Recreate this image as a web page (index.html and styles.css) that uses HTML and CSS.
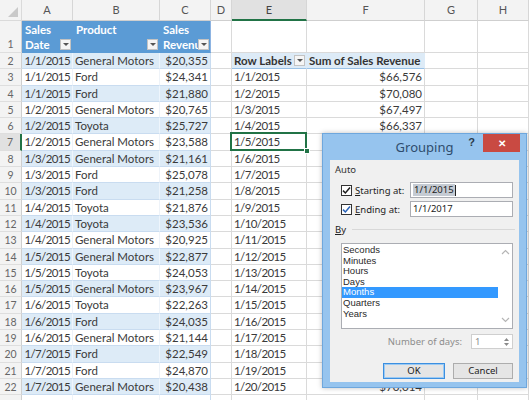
FILE: index.html
```html
<!DOCTYPE html>
<html>
<head>
<meta charset="utf-8">
<link rel="stylesheet" href="styles.css">
</head>
<body>
<div class="sheet">
<div class="corner"></div><div class="ch">A</div><div class="ch">B</div><div class="ch">C</div><div class="ch">D</div><div class="ch selcol">E</div><div class="ch">F</div><div class="ch">G</div><div class="ch">H</div>
<div class="rh rh1">1</div><div class="th">Sales<br>Date<span class="dd"></span></div><div class="th">Product<span class="dd"></span></div><div class="th thc">Sales<br>Revenue<span class="dd"></span></div><div></div><div></div><div></div><div></div><div></div>
<div class="rh">2</div><div class="tb r">1/1/2015</div><div class="tb">General Motors</div><div class="tb r tc">$20,355</div><div></div><div class="ph">Row Labels<span class="dd"></span></div><div class="ph">Sum of Sales Revenue</div><div></div><div></div>
<div class="rh">3</div><div class="tw r">1/1/2015</div><div class="tw">Ford</div><div class="tw r tc">$24,341</div><div></div><div>1/1/2015</div><div class="r">$66,576</div><div></div><div></div>
<div class="rh">4</div><div class="tb r">1/1/2015</div><div class="tb">Ford</div><div class="tb r tc">$21,880</div><div></div><div>1/2/2015</div><div class="r">$70,080</div><div></div><div></div>
<div class="rh">5</div><div class="tw r">1/2/2015</div><div class="tw">General Motors</div><div class="tw r tc">$20,765</div><div></div><div>1/3/2015</div><div class="r">$67,497</div><div></div><div></div>
<div class="rh">6</div><div class="tb r">1/2/2015</div><div class="tb">Toyota</div><div class="tb r tc">$25,727</div><div></div><div>1/4/2015</div><div class="r">$66,337</div><div></div><div></div>
<div class="rh selrow">7</div><div class="tw r">1/2/2015</div><div class="tw">General Motors</div><div class="tw r tc">$23,588</div><div></div><div class="active">1/5/2015<span class="handle"></span></div><div class="r"></div><div></div><div></div>
<div class="rh">8</div><div class="tb r">1/3/2015</div><div class="tb">General Motors</div><div class="tb r tc">$21,161</div><div></div><div>1/6/2015</div><div class="r"></div><div></div><div></div>
<div class="rh">9</div><div class="tw r">1/3/2015</div><div class="tw">Ford</div><div class="tw r tc">$25,078</div><div></div><div>1/7/2015</div><div class="r"></div><div></div><div></div>
<div class="rh">10</div><div class="tb r">1/3/2015</div><div class="tb">Ford</div><div class="tb r tc">$21,258</div><div></div><div>1/8/2015</div><div class="r"></div><div></div><div></div>
<div class="rh">11</div><div class="tw r">1/4/2015</div><div class="tw">Toyota</div><div class="tw r tc">$21,876</div><div></div><div>1/9/2015</div><div class="r"></div><div></div><div></div>
<div class="rh">12</div><div class="tb r">1/4/2015</div><div class="tb">Toyota</div><div class="tb r tc">$23,536</div><div></div><div>1/10/2015</div><div class="r"></div><div></div><div></div>
<div class="rh">13</div><div class="tw r">1/4/2015</div><div class="tw">General Motors</div><div class="tw r tc">$20,925</div><div></div><div>1/11/2015</div><div class="r"></div><div></div><div></div>
<div class="rh">14</div><div class="tb r">1/5/2015</div><div class="tb">General Motors</div><div class="tb r tc">$22,877</div><div></div><div>1/12/2015</div><div class="r"></div><div></div><div></div>
<div class="rh">15</div><div class="tw r">1/5/2015</div><div class="tw">Toyota</div><div class="tw r tc">$24,053</div><div></div><div>1/13/2015</div><div class="r"></div><div></div><div></div>
<div class="rh">16</div><div class="tb r">1/5/2015</div><div class="tb">General Motors</div><div class="tb r tc">$23,967</div><div></div><div>1/14/2015</div><div class="r"></div><div></div><div></div>
<div class="rh">17</div><div class="tw r">1/6/2015</div><div class="tw">Toyota</div><div class="tw r tc">$22,263</div><div></div><div>1/15/2015</div><div class="r"></div><div></div><div></div>
<div class="rh">18</div><div class="tb r">1/6/2015</div><div class="tb">Ford</div><div class="tb r tc">$24,035</div><div></div><div>1/16/2015</div><div class="r"></div><div></div><div></div>
<div class="rh">19</div><div class="tw r">1/6/2015</div><div class="tw">General Motors</div><div class="tw r tc">$21,144</div><div></div><div>1/17/2015</div><div class="r"></div><div></div><div></div>
<div class="rh">20</div><div class="tb r">1/7/2015</div><div class="tb">Ford</div><div class="tb r tc">$22,549</div><div></div><div>1/18/2015</div><div class="r"></div><div></div><div></div>
<div class="rh">21</div><div class="tw r">1/7/2015</div><div class="tw">Ford</div><div class="tw r tc">$24,870</div><div></div><div>1/19/2015</div><div class="r"></div><div></div><div></div>
<div class="rh">22</div><div class="tb r">1/7/2015</div><div class="tb">General Motors</div><div class="tb r tc">$20,438</div><div></div><div>1/20/2015</div><div class="r">$70,014</div><div></div><div></div>
<div class="rh"></div><div class="tw r"></div><div class="tw"></div><div class="tw r tc"></div><div></div><div></div><div class="r"></div><div></div><div></div>
</div>

<div class="dlg">
  <div class="dlg-title">
    <span></span>
    <span class="dlg-name">Grouping</span>
    <span class="dlg-ctrls"><span class="help">?</span><span class="close">&#x2715;</span></span>
  </div>
  <div class="dlg-body">
    <div class="grp">Auto</div>
    <div class="frow">
      <span class="chk"><svg width="9" height="9" viewBox="0 0 9 9"><path d="M1 4.6 L3.4 7 L8 1.6" fill="none" stroke="#1e1e1e" stroke-width="1.5"/></svg></span>
      <span class="flbl"><u>S</u>tarting at:</span>
      <span class="tbox"><span class="seltext">1/1/2015</span><span class="caret"></span></span>
    </div>
    <div class="frow">
      <span class="chk"><svg width="9" height="9" viewBox="0 0 9 9"><path d="M1 4.6 L3.4 7 L8 1.6" fill="none" stroke="#2a63b8" stroke-width="1.5"/></svg></span>
      <span class="flbl"><u>E</u>nding at:</span>
      <span class="tbox">1/1/2017</span>
    </div>
    <div class="by"><span><u>B</u>y</span><span class="sep"></span></div>
    <div class="list">
      <div class="items">
        <div>Seconds</div>
        <div>Minutes</div>
        <div>Hours</div>
        <div>Days</div>
        <div class="hl">Months</div>
        <div>Quarters</div>
        <div>Years</div>
      </div>
      <div class="vscroll">
        <svg width="9" height="6" viewBox="0 0 9 6"><path d="M1 5 L4.5 1.5 L8 5" fill="none" stroke="#b5b5b5" stroke-width="1.2"/></svg>
        <svg width="9" height="6" viewBox="0 0 9 6"><path d="M1 1 L4.5 4.5 L8 1" fill="none" stroke="#b5b5b5" stroke-width="1.2"/></svg>
      </div>
    </div>
    <div class="days">
      <span class="dlbl">Number of days:</span>
      <span class="spin"><span>1</span><span class="arrows"><svg width="5" height="3" viewBox="0 0 5 3"><path d="M0 3 L2.5 0 L5 3Z" fill="#8a8a8a"/></svg><svg width="5" height="3" viewBox="0 0 5 3"><path d="M0 0 L2.5 3 L5 0Z" fill="#8a8a8a"/></svg></span></span>
    </div>
    <div class="btns">
      <span class="btn ok">OK</span>
      <span class="btn">Cancel</span>
    </div>
  </div>
</div>
</body>
</html>
```

FILE: styles.css
```css
* { box-sizing: border-box; }
body {
  margin: 0;
  width: 529px;
  height: 400px;
  overflow: hidden;
  background: #fff;
  position: relative;
  font-family: Lato, "Open Sans", sans-serif;
}
.sheet {
  display: grid;
  grid-template-columns: 22px 51px 87px 51px 21px 75px 118px 53px 51px;
  grid-template-rows: 21px 32px repeat(22, 16.3px);
  font-size: 11.5px;
  color: #3a3a3a;
}
.sheet > div {
  position: relative;
  border-right: 1px solid #dadada;
  border-bottom: 1px solid #dadada;
  white-space: nowrap;
  overflow: hidden;
  padding: 0 2px;
  line-height: 16px;
}
.sheet > .r:nth-child(9n+2),
.sheet > div:nth-child(9n+6):not(.ph):not(.ch) {
  letter-spacing: -0.6px;
}
.corner { background: #f3f3f3; }
.corner::after {
  content: "";
  position: absolute;
  right: 3px;
  bottom: 3px;
  border-style: solid;
  border-width: 0 0 10px 10px;
  border-color: transparent transparent #c9c9c9 transparent;
}
.sheet > .ch {
  background: #f3f3f3;
  text-align: center;
  line-height: 20px;
  color: #555;
  font-size: 11px;
  border-right-color: #d6d6d6;
  border-bottom-color: #cfcfcf;
}
.sheet > .selcol {
  background: #e1e1e1;
  border-bottom: 2px solid #217346;
  color: #444;
}
.sheet > .rh {
  background: #f3f3f3;
  text-align: center;
  color: #666;
  font-size: 10.5px;
  border-right-color: #cfcfcf;
  border-bottom-color: #dedede;
  padding: 0;
}
.sheet > .rh1 { padding-top: 15px; }
.sheet > .selrow {
  background: #e1e1e1;
  border-right: 2px solid #217346;
}
.sheet > .th {
  background: #5b9bd5;
  color: #fff;
  font-weight: bold;
  white-space: normal;
  line-height: 15px;
  padding: 1px 3px 0;
  border-right-color: #5b9bd5;
  border-bottom-color: #5b9bd5;
}
.sheet > .thc { border-right-color: #8db4e2; }
.dd {
  position: absolute;
  right: 1px;
  bottom: 2px;
  width: 11px;
  height: 11px;
  background: #f5f5f5;
  border: 1px solid #c3c3c3;
}
.dd::after {
  content: "";
  position: absolute;
  left: 2px;
  top: 3px;
  border-style: solid;
  border-width: 3px 3px 0 3px;
  border-color: #555 transparent transparent transparent;
}
.sheet > .tb {
  background: #ddebf7;
  border-right-color: #eef5fc;
  border-bottom-color: #c9dcf0;
}
.sheet > .tw {
  background: #fff;
  border-right-color: #eef3f9;
  border-bottom-color: #c9dcf0;
}
.sheet > .tc { border-right-color: #c9dcf0; }
.sheet > .r { text-align: right; }
.sheet > .ph {
  background: #ddebf7;
  font-weight: bold;
  color: #333;
  border-bottom: 1px solid #9bc2e6;
  border-right-color: #ddebf7;
}
.sheet > .active { overflow: visible; z-index: 2; }
.sheet > .active::before {
  content: "";
  position: absolute;
  left: -2px;
  top: -2px;
  right: -1px;
  bottom: -1px;
  border: 2px solid #217346;
}
.handle {
  position: absolute;
  right: -4px;
  bottom: -4px;
  width: 6px;
  height: 6px;
  background: #217346;
  border: 1px solid #fff;
}

/* dialog */
.dlg {
  position: absolute;
  left: 322px;
  top: 133px;
  width: 205px;
  height: 255px;
  background: #96c4ee;
  border: 1px solid #6ea7dd;
  padding: 0 7px 5px;
  display: flex;
  flex-direction: column;
  font-family: "Noto Sans", "Open Sans", sans-serif;
  font-size: 9.5px;
  color: #222;
  box-shadow: 0 0 5px rgba(0, 0, 0, 0.25);
  z-index: 5;
}
.dlg-title {
  height: 26px;
  flex: none;
  display: grid;
  grid-template-columns: 1fr auto 1fr;
}
.dlg-name {
  font-size: 13px;
  color: #2e4c6d;
  line-height: 26px;
  align-self: center;
}
.dlg-ctrls {
  display: flex;
  justify-content: flex-end;
  align-items: flex-start;
  margin-right: -1px;
}
.help {
  font-weight: bold;
  font-size: 11px;
  color: #2a3a4a;
  margin-top: 2px;
  margin-right: 8px;
  font-family: "Liberation Sans", sans-serif;
}
.close {
  width: 37px;
  height: 18px;
  background: #c94a42;
  color: #fff;
  font-size: 10px;
  font-weight: bold;
  line-height: 18px;
  text-align: center;
}
.dlg-body {
  flex: 1;
  background: #f0f0f0;
  padding: 4px 6px 0 5px;
  display: flex;
  flex-direction: column;
}
.grp { line-height: 12px; height: 12px; color: #333; }
.frow {
  display: flex;
  align-items: center;
  height: 16px;
  margin-left: 6px;
  margin-top: 6px;
}
.frow + .frow { margin-top: 3px; }
.chk {
  width: 11px;
  height: 11px;
  border: 1px solid #333;
  background: #fff;
  display: flex;
  align-items: center;
  justify-content: center;
  flex: none;
}
.flbl { width: 55px; margin-left: 3px; color: #222; }
.tbox {
  flex: 1;
  height: 16px;
  background: #fff;
  border: 1px solid #abadb3;
  line-height: 14px;
  padding-left: 2px;
  display: flex;
  align-items: center;
  color: #222;
}
.seltext { background: #c5cbd3; padding: 0 1px; line-height: 12px; }
.caret { width: 1px; height: 11px; background: #222; }
.by {
  display: flex;
  align-items: center;
  height: 12px;
  margin-top: 6px;
}
.sep { flex: 1; height: 1px; background: #d8d8d8; margin-left: 6px; margin-right: -2px; }
.list {
  margin: 8px 0 0 6px;
  height: 86px;
  background: #fff;
  border: 1px solid #abadb3;
  display: flex;
}
.items { flex: 1; padding-top: 1px; font-family: "Liberation Sans", Arial, sans-serif; font-size: 9.5px; }
.items div { line-height: 10.6px; height: 10.6px; padding-left: 1px; color: #2a2a2a; }
.items .hl { background: #3399ff; color: #fff; }
.vscroll {
  width: 14px;
  display: flex;
  flex-direction: column;
  justify-content: space-between;
  align-items: center;
  padding: 5px 0 5px;
}
.days {
  display: flex;
  justify-content: flex-end;
  align-items: center;
  height: 15px;
  margin-top: 5px;
}
.dlbl { color: #8d8d8d; margin-right: 9px; }
.spin {
  width: 42px;
  height: 15px;
  border: 1px solid #cfcfcf;
  background: #fff;
  display: flex;
  justify-content: space-between;
  align-items: center;
  padding: 0 3px;
  color: #8d8d8d;
}
.arrows { display: flex; flex-direction: column; gap: 2px; }
.arrows svg { display: block; }
.btns {
  display: flex;
  justify-content: flex-end;
  gap: 8px;
  margin-top: 14px;
}
.btn {
  width: 60px;
  height: 16px;
  border: 1px solid #adadad;
  background: #e5e5e5;
  text-align: center;
  line-height: 14px;
  color: #222;
}
.btn.ok { width: 62px; border-color: #3c8fe0; box-shadow: inset 0 0 0 1px #9ccaf3; }
```
